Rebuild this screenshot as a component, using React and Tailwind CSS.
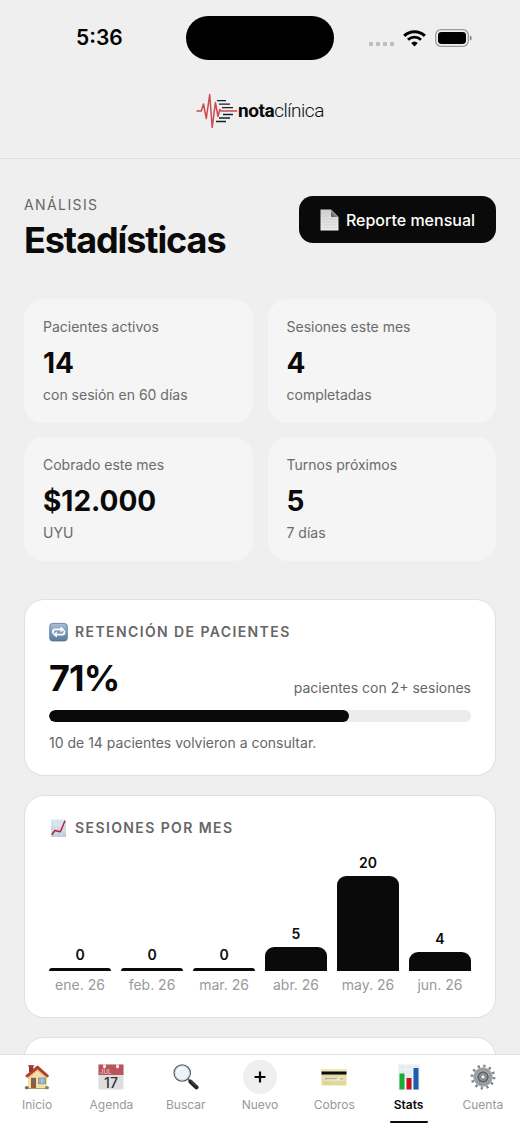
import React, { useState } from "react";

const stats = [
  { label: "Pacientes activos", value: "14", detail: "con sesión en 60 días" },
  { label: "Sesiones este mes", value: "4", detail: "completadas" },
  { label: "Cobrado este mes", value: "$12.000", detail: "UYU" },
  { label: "Turnos próximos", value: "5", detail: "7 días" },
];

const months = [
  { label: "ene. 26", count: 0 },
  { label: "feb. 26", count: 0 },
  { label: "mar. 26", count: 0 },
  { label: "abr. 26", count: 5 },
  { label: "may. 26", count: 20 },
  { label: "jun. 26", count: 4 },
];

const MAX_BAR = 95;

/* ---------- Icons ---------- */

const WifiIcon = () => (
  <svg width="23" height="17" viewBox="0 0 23 17" fill="none" stroke="#000">
    <path d="M1.2 5.9a14.8 14.8 0 0 1 20.6 0" strokeWidth="3" />
    <path d="M5 9.7a9.4 9.4 0 0 1 13 0" strokeWidth="2.8" />
    <path
      d="M11.5 16.4 8.2 13.1a4.8 4.8 0 0 1 6.6 0Z"
      fill="#000"
      stroke="none"
    />
  </svg>
);

const BatteryIcon = () => (
  <svg width="37" height="18" viewBox="0 0 37 18">
    <rect x="0.7" y="0.7" width="32.6" height="16.6" rx="5.2" fill="none" stroke="#999" strokeWidth="1.3" />
    <rect x="3" y="3" width="28" height="12" rx="3.4" fill="#000" />
    <path d="M34.8 6.4c1.3.4 2 1.4 2 2.6s-.7 2.2-2 2.6Z" fill="#8a8a8a" />
  </svg>
);

const PulseLogo = () => (
  <svg width="42" height="36" viewBox="0 0 42 36" fill="none">
    <g stroke="#1b1e22" strokeWidth="1.3">
      <path d="M21 7.7h9M23 11.2h11M26 14.7h11M27 21.5h10M23 25h11M20 28.5h10" />
    </g>
    <path
      d="M.5 18h4.800l2.200-7 2.800 14.500L13.700 1.500l2.500 33L19.400 9.500l2.600 14 1.800-7 1.400 1.600h16"
      stroke="#cc4a50"
      strokeWidth="1.5"
      strokeLinejoin="round"
    />
  </svg>
);

const PageIcon = () => (
  <svg width="19" height="22" viewBox="0 0 19 22">
    <defs>
      <linearGradient id="page" x1="0" y1="0" x2="0" y2="1">
        <stop offset="0" stopColor="#cfcfcf" />
        <stop offset="1" stopColor="#ededed" />
      </linearGradient>
      <linearGradient id="fold" x1="0" y1="1" x2="1" y2="0">
        <stop offset="0" stopColor="#444" />
        <stop offset="0.7" stopColor="#bbb" />
      </linearGradient>
    </defs>
    <path d="M.5.5h10.500l7.500 7.500v13.500H.5Z" fill="url(#page)" />
    <path d="M11 .5v6.300q0 1.200 1.200 1.200h6.300Z" fill="url(#fold)" />
    <path d="M2.500 4h6.500M2.500 7h6.500M2.500 10h14M2.500 13h14M2.500 16h14M2.500 18.800h14" stroke="#c9c9c9" strokeWidth="0.6" />
  </svg>
);

const RepeatIcon = () => (
  <svg width="20" height="20" viewBox="0 0 20 20">
    <defs>
      <linearGradient id="repeat" x1="0" y1="0" x2="0" y2="1">
        <stop offset="0" stopColor="#a4bfdb" />
        <stop offset="1" stopColor="#57799c" />
      </linearGradient>
    </defs>
    <rect x="0.7" y="1.400" width="17.600" height="17.600" rx="3" fill="url(#repeat)" stroke="#57728f" strokeWidth="0.8" />
    <g fill="none" stroke="#fff" strokeWidth="1.9">
      <path d="M4 11.500V9.700a2.300 2.300 0 0 1 2.300-2.300h6" />
      <path d="M15.400 8.500v1.800a2.300 2.300 0 0 1-2.300 2.300h-6" />
    </g>
    <path d="m11.500 4.400 4 3-4 3ZM7.900 9.600l-4 3 4 3Z" fill="#fff" />
  </svg>
);

const TrendIcon = () => (
  <svg width="20" height="20" viewBox="0 0 20 20">
    <defs>
      <linearGradient id="trend" x1="0" y1="0" x2="0" y2="1">
        <stop offset="0" stopColor="#dce8f0" />
        <stop offset="1" stopColor="#bccbd8" />
      </linearGradient>
    </defs>
    <rect x="2" y="1.500" width="15" height="17.500" fill="url(#trend)" />
    <path d="M2 7.200h15M2 12.800h15M7 1.500v17.500M12 1.500v17.500" stroke="#e2ebf1" strokeWidth="0.6" />
    <path d="m2.900 16.700 2.900-4.200 5.600 1.200L16 2.800" fill="none" stroke="#b5213c" strokeWidth="1.5" strokeLinejoin="round" />
  </svg>
);

const HouseIcon = () => (
  <svg width="26" height="26" viewBox="0 0 26 26">
    <path d="M5 1.500h4.200V8H5Z" fill="#96382c" />
    <path d="M4.300 1h5.600v1.700H4.300Z" fill="#b7473a" />
    <path d="M4 12 13.500 4 23 12v12.500H4Z" fill="#f4dfab" />
    <path d="M13.500 4 23 12v3l-9.500-8L4 15v-3Z" fill="#dfc07d" />
    <path d="M1.500 11.800 12.700 2.200q.8-.6 1.600 0l10.500 9.600-1.300 1.400-10-8.300L3 13.400Z" fill="#b63a2e" stroke="#8c2b25" strokeWidth="0.5" />
    <path d="M7 13.800h5v10.700H7Z" fill="#9b5933" />
    <path d="M8.200 15.200h2.600v3.600H8.200Z" fill="#4c7590" />
    <path d="M14.500 14h7v5.700h-7Z" fill="#86b8dc" stroke="#8e7a59" strokeWidth="0.7" />
    <path d="M18 14v5.700" stroke="#d9e9f2" strokeWidth="0.5" />
    <path d="M3.500 24h20v1h-20Z" fill="#a99b82" />
    <ellipse cx="2.800" cy="23.700" rx="2" ry="1.600" fill="#55823b" />
    <ellipse cx="23" cy="23.700" rx="2" ry="1.600" fill="#65964a" />
  </svg>
);

const CalendarIcon = () => (
  <svg width="26" height="26" viewBox="0 0 26 26">
    <rect x="0.5" y="0.5" width="25" height="25" fill="#dedede" />
    <rect x="0.5" y="0.5" width="25" height="10.500" fill="#b9555a" />
    <path d="M5 .5h3l-.5 2.500h-2ZM18 .5h3l-.5 2.500h-2Z" fill="#f5eeee" />
    <circle cx="6.500" cy="3" r="1.300" fill="#fff" />
    <circle cx="19.500" cy="3" r="1.300" fill="#fff" />
    <text x="2" y="9.500" fontFamily="Inter, sans-serif" fontSize="6" fill="#f3d9da">
      JUL
    </text>
    <text x="13" y="23.500" textAnchor="middle" fontFamily="Inter, sans-serif" fontSize="14" fontWeight="500" fill="#333">
      17
    </text>
  </svg>
);

const SearchIcon = () => (
  <svg width="26" height="26" viewBox="0 0 26 26">
    <path d="m15 15 3 3" stroke="#777" strokeWidth="2.2" />
    <path d="m17.600 17.800 5.800 5.400" stroke="#222" strokeWidth="4.2" strokeLinecap="round" />
    <path d="m18.200 17 5 4.700" stroke="#686868" strokeWidth="1" strokeLinecap="round" />
    <circle cx="9.200" cy="9" r="8.200" fill="#edf4f8" stroke="#555c62" strokeWidth="1.2" />
    <circle cx="9.200" cy="9" r="7" fill="none" stroke="#c9d2d8" strokeWidth="0.8" />
    <path d="M4 8.200a5.500 5.500 0 0 1 7-4.200" fill="none" stroke="#fff" strokeWidth="1.5" />
  </svg>
);

const PlusIcon = () => (
  <span className="flex size-[34px] items-center justify-center rounded-full bg-[#efefef]">
    <svg width="12" height="12" viewBox="0 0 12 12" stroke="#0a0a0a" strokeWidth="2.2">
      <path d="M6 .5v11M.5 6h11" />
    </svg>
  </span>
);

const CardIcon = () => (
  <svg width="26" height="26" viewBox="0 0 26 26">
    <rect x="0.5" y="5" width="25" height="16.500" rx="1" fill="#e4d998" />
    <rect x="0.5" y="5" width="25" height="2.500" rx="1" fill="#efe8bd" />
    <rect x="0.5" y="7.500" width="25" height="3" fill="#0b0b0b" />
    <rect x="2.500" y="12.500" width="21" height="4.300" fill="#eae6cc" />
    <path d="m3.500 15.500 1.500-1.700.6 1.500 1.800-1.400 1 1.300 1.700-1.300.9 1.200 1.600-1 1.500.7 2-1M19 14.800h3.500" fill="none" stroke="#77745f" strokeWidth="0.6" />
    <path d="M3 19h9" stroke="#d3c785" strokeWidth="0.7" />
  </svg>
);

const ChartIcon = () => (
  <svg width="26" height="26" viewBox="0 0 26 26">
    <rect x="2.500" y="0.5" width="21" height="25" fill="#e4ebf1" />
    <path d="M2.500 5.500h21M2.500 10.500h21M2.500 15.500h21M2.500 20.500h21M9.500.5v25M16.500.5v25" stroke="#f7fafc" strokeWidth="0.6" />
    <rect x="3.500" y="9.500" width="5" height="16" fill="#19ad35" />
    <rect x="10.500" y="14" width="5" height="11.500" fill="#c4141e" />
    <rect x="17.500" y="4" width="5" height="21.500" fill="#1e5cae" />
  </svg>
);

const GearIcon = () => (
  <svg width="26" height="26" viewBox="0 0 26 26" fill="none">
    <circle cx="13" cy="13" r="10.900" stroke="#80858a" strokeWidth="3" strokeDasharray="2.2 3.507" />
    <circle cx="13" cy="13" r="7.900" stroke="#969ba0" strokeWidth="3.4" />
    <circle cx="13" cy="13" r="9.400" stroke="#b9bdc1" strokeWidth="0.7" />
    <circle cx="13" cy="13" r="6" fill="#646a70" />
    <circle cx="13" cy="13" r="4.200" fill="#a4aab0" stroke="#4e545a" strokeWidth="0.7" />
    <circle cx="13" cy="13" r="2.300" fill="#f1f1f1" stroke="#555b61" strokeWidth="0.9" />
  </svg>
);

const tabs = [
  { label: "Inicio", Icon: HouseIcon },
  { label: "Agenda", Icon: CalendarIcon },
  { label: "Buscar", Icon: SearchIcon },
  { label: "Nuevo", Icon: PlusIcon },
  { label: "Cobros", Icon: CardIcon },
  { label: "Stats", Icon: ChartIcon },
  { label: "Cuenta", Icon: GearIcon },
];

/* ---------- Sections ---------- */

const StatusBar = () => (
  <div className="grid h-11 grid-cols-[1fr_148px_1fr] items-center">
    <span className="pl-[76px] text-[21px] font-semibold text-black">5:36</span>
    <div className="h-full rounded-full bg-black" />
    <div className="flex items-center justify-end gap-[9px] pr-12">
      <div className="flex gap-[3px] pt-3">
        <span className="size-1 rounded-[1px] bg-[#bdbdbd]" />
        <span className="size-1 rounded-[1px] bg-[#bdbdbd]" />
        <span className="size-1 rounded-[1px] bg-[#bdbdbd]" />
        <span className="size-1 rounded-[1px] bg-[#bdbdbd]" />
      </div>
      <WifiIcon />
      <BatteryIcon />
    </div>
  </div>
);

const Panel = ({ Icon, title, children }) => (
  <section className="rounded-[20px] border border-[#e0e0e0] bg-white px-6 py-[22px]">
    <h2 className="flex items-center gap-[6px] text-sm font-semibold tracking-widest text-[#666] uppercase">
      <Icon />
      {title}
    </h2>
    {children}
  </section>
);

const App = () => {
  const [active, setActive] = useState("Stats");
  const max = Math.max(...months.map((m) => m.count));

  return (
    <div className="flex h-screen flex-col bg-[#efefef] font-['Inter',sans-serif] text-[#0a0a0a]">
      <header className="shrink-0 border-b border-[#e0e0e0] pt-4">
        <StatusBar />
        <div className="flex h-[98px] items-center justify-center pt-1 font-['Roboto',sans-serif] text-[19px] tracking-tight">
          <PulseLogo />
          <span className="font-bold">nota</span>
          <span className="font-light">clínica</span>
        </div>
      </header>

      <main className="min-h-0 flex-1 overflow-y-auto px-6 pt-[37px] [scrollbar-width:none]">
        <div className="flex items-start justify-between">
          <div>
            <p className="text-sm leading-[18px] tracking-widest text-[#666]">ANÁLISIS</p>
            <h1 className="mt-[6px] text-4xl leading-10 font-bold tracking-[-0.03em]">Estadísticas</h1>
          </div>
          <button
            type="button"
            className="flex h-[47px] items-center gap-[7px] rounded-[14px] bg-[#0a0a0a] px-[21px] text-base font-medium text-white"
          >
            <PageIcon />
            Reporte mensual
          </button>
        </div>

        <div className="mt-[39px] grid grid-cols-2 gap-x-[15px] gap-y-[14px]">
          {stats.map((s) => (
            <div key={s.label} className="rounded-[20px] bg-[#f5f5f5] px-[19px] py-[18px]">
              <p className="text-sm text-[#6b6b6b]">{s.label}</p>
              <p className="mt-[9px] mb-[5px] text-[28px] leading-[34px] font-bold">{s.value}</p>
              <p className="text-sm text-[#6b6b6b]">{s.detail}</p>
            </div>
          ))}
        </div>

        <div className="mt-[38px] flex flex-col gap-[19px]">
          <Panel Icon={RepeatIcon} title="Retención de pacientes">
            <div className="mt-4 flex items-end justify-between">
              <span className="text-4xl leading-10 font-bold tracking-tight">71%</span>
              <span className="text-sm text-[#666]">pacientes con 2+ sesiones</span>
            </div>
            <div className="mt-3 h-3 overflow-hidden rounded-full bg-[#ececec]">
              <div className="h-full rounded-full bg-[#0a0a0a]" style={{ width: "71%" }} />
            </div>
            <p className="mt-[11px] text-sm text-[#666]">10 de 14 pacientes volvieron a consultar.</p>
          </Panel>

          <Panel Icon={TrendIcon} title="Sesiones por mes">
            <div className="mt-4 grid grid-cols-6 items-end gap-[10px] text-center text-sm">
              {months.map((m) => (
                <div key={m.label}>
                  <p className="mb-1 leading-[18px] font-semibold">{m.count}</p>
                  {/* empty months still get a thin line */}
                  <div
                    className="rounded-t-[9px] bg-[#0a0a0a]"
                    style={{ height: Math.max(3, Math.round((m.count / max) * MAX_BAR)) }}
                  />
                  <p className="mt-1 text-[#999]">{m.label}</p>
                </div>
              ))}
            </div>
          </Panel>

          <section className="h-40 rounded-[20px] border border-[#e0e0e0] bg-white" />
        </div>
      </main>

      <nav className="grid h-[75px] shrink-0 grid-cols-7 border-t border-[#e0e0e0] bg-white">
        {tabs.map(({ label, Icon }) => (
          <button
            key={label}
            type="button"
            onClick={() => setActive(label)}
            className="flex flex-col items-center pt-[6px] text-xs"
          >
            <span className="flex h-8 items-center">
              <Icon />
            </span>
            <span className={label === active ? "mt-1 font-semibold" : "mt-1 text-[#999]"}>{label}</span>
            {label === active && <span className="mt-2 h-[2px] w-[38px] rounded-full bg-[#0a0a0a]" />}
          </button>
        ))}
      </nav>
    </div>
  );
};

export default App;
